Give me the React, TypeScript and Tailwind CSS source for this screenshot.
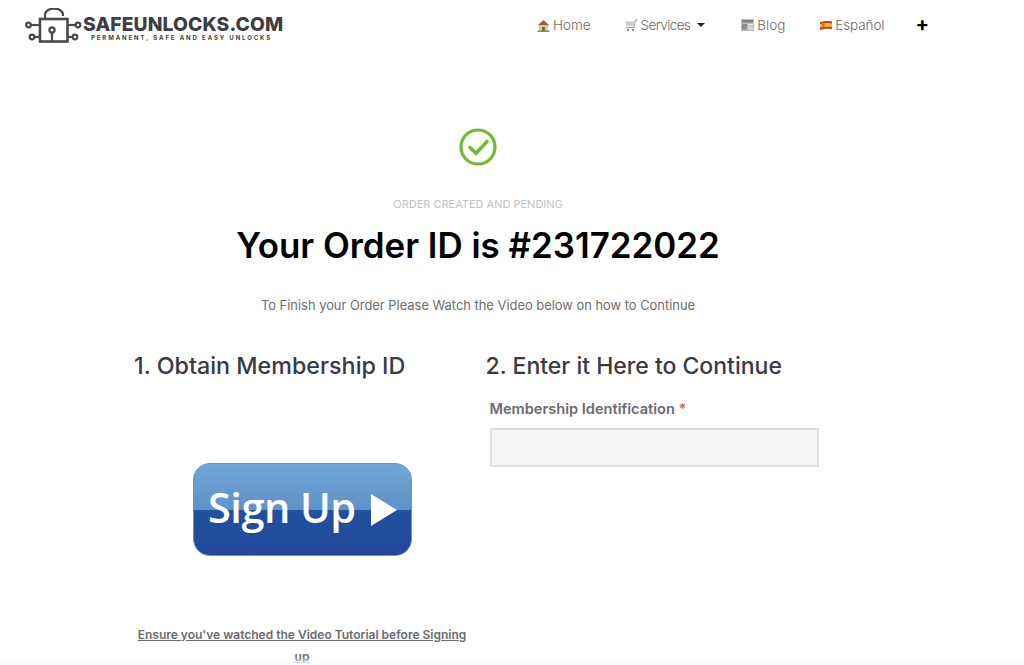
import React from "react";

function Logo() {
  return (
    <svg width="57" height="36" viewBox="0 0 57 36" fill="none" stroke="#4a4a4a" strokeWidth="2.2" className="shrink-0">
      <path d="M20 10 V7 C20 -1.5 38 -1.5 38 7 V8" />
      <rect x="15" y="11" width="27.5" height="22.5" strokeWidth="2.6" />
      <circle cx="27" cy="22" r="2.6" />
      <path d="M27 24.6 V33" />
      <circle cx="3.5" cy="17" r="2.3" />
      <path d="M6 17 H15" />
      <circle cx="7" cy="29" r="2.3" />
      <path d="M9.5 29 H15" />
      <circle cx="53" cy="17" r="2.3" />
      <path d="M50.5 17 H42" />
      <circle cx="50" cy="29" r="2.3" />
      <path d="M47.5 29 H42" />
    </svg>
  );
}

function HomeIcon() {
  return (
    <svg width="13" height="13" viewBox="0 0 13 13">
      <path d="M0.5 6.5 L6.5 1 L12.5 6.5 Z" fill="#a5583a" />
      <rect x="2" y="6" width="9" height="6.5" fill="#d8c9a8" />
      <rect x="5.2" y="8" width="2.6" height="4.5" fill="#7a5030" />
      <rect x="0.5" y="11.5" width="12" height="1.5" fill="#6d9a5a" />
    </svg>
  );
}

function CartIcon() {
  return (
    <svg width="13" height="13" viewBox="0 0 13 13" fill="none">
      <path d="M12.5 1 H10.5 L9 8.5 H1" stroke="#9a9a9a" strokeWidth="1" />
      <path d="M10 2.5 H0.5 L1.5 7 H9.2 Z" fill="#c9ced2" />
      <circle cx="3" cy="11" r="1.2" fill="#8a8a8a" />
      <circle cx="8" cy="11" r="1.2" fill="#8a8a8a" />
    </svg>
  );
}

function NewsIcon() {
  return (
    <svg width="13" height="12" viewBox="0 0 13 12">
      <rect width="13" height="12" fill="#bdbdbd" />
      <rect x="1" y="1" width="11" height="2.5" fill="#7e7e7e" />
      <rect x="1" y="5" width="5" height="5.5" fill="#8c8c8c" />
      <rect x="7" y="5" width="5" height="1" fill="#eeeeee" />
      <rect x="7" y="7.5" width="5" height="1" fill="#eeeeee" />
      <rect x="7" y="9.5" width="5" height="1" fill="#eeeeee" />
    </svg>
  );
}

function FlagIcon() {
  return (
    <svg width="12" height="9" viewBox="0 0 12 9">
      <path d="M0 1.2 Q6 -0.6 12 0.6 V8 Q6 7 0 9 Z" fill="#c8391f" />
      <path d="M0 3 Q6 1.6 12 2.4 V6 Q6 5.2 0 6.8 Z" fill="#f0b92c" />
      <rect x="2.5" y="3.2" width="2" height="2.4" fill="#b5542b" />
    </svg>
  );
}

function NavItem({ icon, label, caret, labelClass }: { icon: React.ReactNode; label: string; caret?: boolean; labelClass?: string }) {
  return (
    <a className="flex items-center text-[13.5px] text-[#6a6a6a] font-['Inter',sans-serif] font-light">
      <span className="mr-[3px] flex items-center">{icon}</span>
      <span className={labelClass}>{label}</span>
      {caret && <span className="ml-[7px] h-0 w-0 border-x-[4px] border-t-[4.5px] border-x-transparent border-t-[#222]" />}
    </a>
  );
}

export default function App() {
  return (
    <div className="relative h-[665px] w-[1024px] overflow-hidden bg-white font-['Inter',sans-serif]">
      <header className="flex h-[50px] items-start">
        <div className="ml-[25px] mt-[8px] flex w-[260px] items-start">
          <Logo />
          <div className="ml-[1px] mt-[8px] flex flex-col">
            <span className="text-[19.3px] leading-[17px] font-extrabold tracking-[0.1px] text-[#3f3f3f] whitespace-nowrap">
              SAFEUNLOCKS.COM
            </span>
            <span className="ml-[8px] mt-[1px] text-[6px] leading-[7px] font-bold tracking-[1.9px] text-[#3f3f3f] whitespace-nowrap">
              PERMANENT, SAFE AND EASY UNLOCKS
            </span>
          </div>
        </div>
        <nav className="ml-[252px] mt-[15px] flex items-center">
          <NavItem icon={<HomeIcon />} label="Home" />
          <div className="ml-[34px]"><NavItem icon={<CartIcon />} label="Services" caret labelClass="tracking-[-0.6px]" /></div>
          <div className="ml-[36px]"><NavItem icon={<NewsIcon />} label="Blog" /></div>
          <div className="ml-[35px]"><NavItem icon={<FlagIcon />} label="Español" labelClass="tracking-[-0.1px]" /></div>
          <span className="ml-[31px] -mt-[3px] text-[20px] leading-[18px] font-bold text-black">+</span>
        </nav>
      </header>

      <main className="flex w-[956px] flex-col items-center">
        <svg width="38" height="38" viewBox="0 0 38 38" fill="none" className="mt-[78px]">
          <circle cx="19" cy="19" r="17" stroke="#72bb3a" strokeWidth="3.2" />
          <path d="M11 19.5 L17 25.5 L28 13.5" stroke="#72bb3a" strokeWidth="3.6" strokeLinecap="round" strokeLinejoin="round" />
        </svg>
        <p className="mt-[30px] text-[11px] leading-[16px] text-[#c2c2c2]">ORDER CREATED AND PENDING</p>
        <h1 className="mt-[11px] text-[34.9px] leading-[44px] font-semibold text-black">Your Order ID is #231722022</h1>
        <p className="mt-[29px] text-[12.9px] leading-[20px] text-[#6f6f6f]">
          To Finish your Order Please Watch the Video below on how to Continue
        </p>

        <div className="mt-[35px] flex w-full pl-[134px]">
          <section className="w-[352px]">
            <h2 className="text-[23.3px] leading-[30px] font-medium text-[#3a3a44]">1. Obtain Membership ID</h2>
            <a className="relative ml-[59px] mt-[82px] flex h-[93px] w-[219px] items-center overflow-hidden rounded-[17px] border border-[#6f90c4] bg-[linear-gradient(#6fa6d8_0%,#5f92c8_50%,#23509f_51%,#21479a_100%)] pl-[14px]">
              <span className="mt-[-6px] font-['Open_Sans',sans-serif] text-[41.5px] leading-[44px] font-semibold text-white tracking-[-0.5px]">Sign Up</span>
              <span className="ml-[15px] h-0 w-0 border-y-[16px] border-l-[26px] border-y-transparent border-l-white" />
            </a>
            <p className="mt-[68px] w-[336px] text-center text-[12px] leading-[22px] font-semibold text-[#6b6b72] underline">
              Ensure you've watched the Video Tutorial before Signing up
            </p>
          </section>
          <section className="-ml-[0.5px]">
            <h2 className="text-[23px] leading-[30px] font-medium text-[#3a3a44]">2. Enter it Here to Continue</h2>
            <div className="ml-[4px] mt-[18px]">
              <label className="block text-[14.6px] leading-[20px] font-semibold text-[#6b6b72]">
                Membership Identification <span className="text-[#c4704a]">*</span>
              </label>
              <input className="mt-[9px] block h-[39px] w-[329px] border-2 border-[#dedede] bg-[#f6f6f6]" />
            </div>
          </section>
        </div>
      </main>
      <div className="absolute inset-x-0 bottom-0 h-[8px] bg-[linear-gradient(rgba(250,250,250,0),#fafafa)]" />
    </div>
  );
}
